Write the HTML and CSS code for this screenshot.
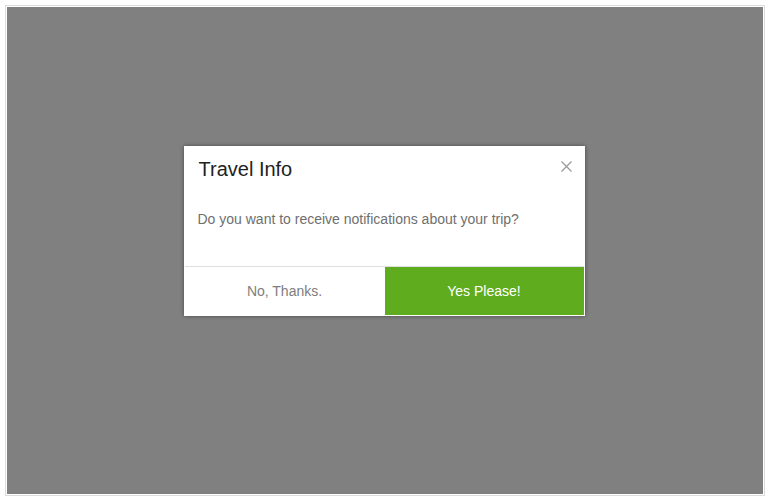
FILE: index.html
```html
<!DOCTYPE html>
<html lang="en">
<head>
  <meta charset="UTF-8" />
  <title>Travel Info</title>
  <link rel="stylesheet" href="styles.css">
</head>
<body>
<div class="frame">
  <div class="overlay">
    <div class="modal">
      <div class="modal-header">
        <h1>Travel Info</h1>
        <button type="button" class="close" aria-label="Close">
          <svg width="11" height="11" viewBox="0 0 11 11"><path d="M0.5 0.5 L10.5 10.5 M10.5 0.5 L0.5 10.5" stroke="#9a9a9a" stroke-width="1.3" fill="none"/></svg>
        </button>
      </div>
      <div class="modal-body">
        <p>Do you want to receive notifications about your trip?</p>
      </div>
      <div class="modal-footer">
        <button type="button" class="btn btn-no">No, Thanks.</button>
        <button type="button" class="btn btn-yes">Yes Please!</button>
      </div>
    </div>
  </div>
</div>
</body>
</html>
```

FILE: styles.css
```css
body {
  margin: 0;
  background-color: #fff;
  font-family: 'Liberation Sans', Arial, sans-serif;
}

.frame {
  margin: 5px;
  border: 1px solid #dcdcdc;
  padding: 1px;
}

.overlay {
  height: 487px;
  background-color: #808080;
  display: flex;
  justify-content: center;
  align-items: flex-start;
  padding: 139px 2px 0 0;
  box-sizing: border-box;
}

.modal {
  width: 401px;
  background-color: #fff;
  border: 1px solid #fff;
  box-sizing: border-box;
  box-shadow: 0 0 4px rgba(0, 0, 0, 0.45);
}

.modal-header {
  display: flex;
  justify-content: space-between;
  align-items: flex-start;
  padding: 11px 12px 0 14px;
}

.modal-header h1 {
  margin: 0;
  font-size: 20px;
  font-weight: normal;
  line-height: 22px;
  color: #222;
}

.close {
  border: none;
  background: none;
  padding: 0;
  margin-top: 3px;
  cursor: pointer;
  line-height: 0;
}

.modal-body {
  padding: 29px 12px 37px 13px;
}

.modal-body p {
  margin: 0;
  font-size: 14px;
  line-height: 20px;
  color: #6f6f6f;
}

.modal-footer {
  display: flex;
  border-top: 1px solid #dedede;
}

.btn {
  height: 48px;
  border: none;
  font-family: 'Liberation Sans', Arial, sans-serif;
  font-size: 14px;
  cursor: pointer;
}

.btn-no {
  flex: 0 0 200px;
  background-color: #fff;
  color: #7d7d7d;
}

.btn-yes {
  flex: 1;
  background-color: #5fad1f;
  color: #fff;
}
```
